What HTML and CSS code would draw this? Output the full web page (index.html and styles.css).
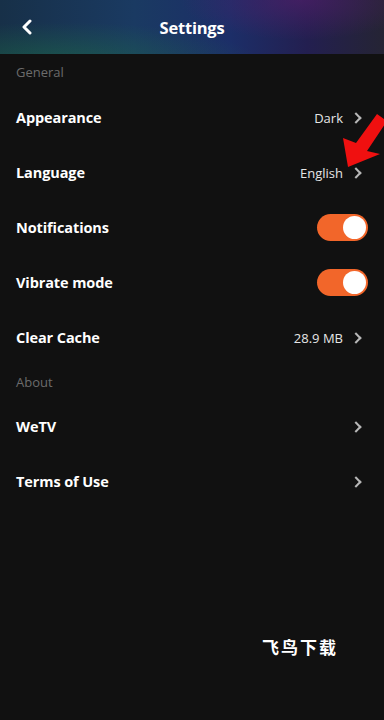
FILE: index.html
```html
<!DOCTYPE html>
<html>
<head>
<meta charset="utf-8">
<link rel="stylesheet" href="styles.css">
</head>
<body>
<div class="screen">
  <header class="topbar">
    <svg class="back" width="12" height="16" viewBox="0 0 12 16"><path d="M9 2 L3 8 L9 14" fill="none" stroke="#fff" stroke-width="3" stroke-linecap="round" stroke-linejoin="round"/></svg>
    <h1 class="title">Settings</h1>
  </header>
  <div class="section">General</div>
  <div class="row"><span class="label">Appearance</span><span class="value">Dark</span><span class="chev"></span></div>
  <div class="row"><span class="label">Language</span><span class="value">English</span><span class="chev"></span></div>
  <div class="row"><span class="label">Notifications</span><span class="toggle"><span class="knob"></span></span></div>
  <div class="row"><span class="label">Vibrate mode</span><span class="toggle"><span class="knob"></span></span></div>
  <div class="row"><span class="label">Clear Cache</span><span class="value">28.9 MB</span><span class="chev"></span></div>
  <div class="section about">About</div>
  <div class="row"><span class="label">WeTV</span><span class="chev"></span></div>
  <div class="row"><span class="label">Terms of Use</span><span class="chev"></span></div>
  <div class="watermark">飞鸟下载</div>
  <svg class="arrow" width="384" height="720" viewBox="0 0 384 720"><polygon points="348,167 343,138 356,143 377,114 387,121 367,151 380,154" fill="#f01010"/></svg>
</div>
</body>
</html>
```
FILE: styles.css
```css
html, body { margin: 0; padding: 0; background: #111111; }
.screen {
  position: relative;
  width: 384px;
  height: 720px;
  background: #111111;
  font-family: "Open Sans", "Noto Sans", sans-serif;
  overflow: hidden;
}
.topbar {
  position: relative;
  height: 54px;
  display: flex;
  align-items: center;
  justify-content: center;
  background:
    radial-gradient(ellipse 200px 40px at 60px 62px, rgba(30,110,70,0.55), rgba(30,110,70,0) 100%),
    radial-gradient(ellipse 120px 40px at 300px 0px, rgba(90,30,110,0.55), rgba(90,30,110,0) 100%),
    linear-gradient(90deg, #173048 0%, #1a3a62 35%, #1c2e68 60%, #231f50 80%, #252434 100%);
}
.back { position: absolute; left: 21px; top: 19px; }
.title {
  margin: 0;
  color: #fff;
  font-size: 16.5px;
  font-weight: 700;
  letter-spacing: -0.2px;
}
.section {
  height: 36px;
  display: flex;
  align-items: center;
  padding-left: 16px;
  color: #6c6c6c;
  font-size: 13px;
}
.section.about { height: 34px; }
.row {
  height: 55px;
  display: flex;
  align-items: center;
  padding: 0 16px;
}
.label {
  flex: 1;
  color: #fff;
  font-size: 14.5px;
  font-weight: 700;
  letter-spacing: -0.1px;
}
.value {
  color: #e6e6e6;
  font-size: 13px;
  margin-right: 9px;
}
.chev {
  width: 6px;
  height: 6px;
  border-right: 2px solid #b8b8b8;
  border-top: 2px solid #b8b8b8;
  transform: rotate(45deg);
  margin-right: 8px;
}
.toggle {
  width: 51px;
  height: 27px;
  border-radius: 14px;
  background: #f2662a;
  display: flex;
  align-items: center;
  justify-content: flex-end;
  padding-right: 2px;
  box-sizing: border-box;
}
.knob {
  width: 23px;
  height: 23px;
  border-radius: 50%;
  background: #fff;
}
.watermark {
  position: absolute;
  left: 262px;
  top: 634px;
  color: #fff;
  font-family: "Noto Sans CJK SC", sans-serif;
  font-weight: 700;
  font-size: 17px;
  letter-spacing: 2px;
}
.arrow { position: absolute; left: 0; top: 0; }
```
